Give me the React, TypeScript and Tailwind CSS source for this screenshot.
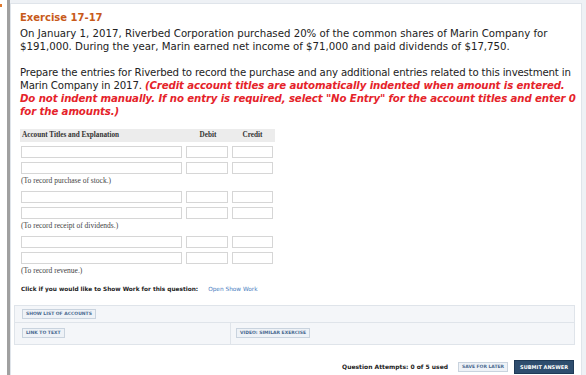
import React from "react";

const verdana = "font-['DejaVu_Sans',Verdana,sans-serif]";
const serif = "font-['Liberation_Serif',serif]";

function EntryRow() {
  return (
    <div className="flex gap-[4px] h-[12px]">
      <div className="w-[161px] border border-[#d6d6d6] bg-white" />
      <div className="w-[42px] border border-[#d6d6d6] bg-white" />
      <div className="w-[41px] border border-[#d6d6d6] bg-white" />
    </div>
  );
}

function Entry({ label }: { label: string }) {
  return (
    <div className="flex flex-col">
      <div className="flex flex-col gap-[4px]">
        <EntryRow />
        <EntryRow />
      </div>
      <p className={`${serif} text-[7.5px] text-[#444] mt-[2px] leading-[10px]`}>{label}</p>
    </div>
  );
}

function SmallBtn({ children }: { children: React.ReactNode }) {
  return (
    <span className={`${verdana} block border border-[#c9d3de] bg-[#eef2f7] text-[#4a6a90] font-bold text-[4.5px] px-[3px] py-[1px] leading-[6px]`}>
      {children}
    </span>
  );
}

export default function App() {
  return (
    <div className="flex w-[586px] h-[375px] overflow-hidden bg-white">
      <div className="w-[7px] relative">
        <div className="absolute left-0 top-[4px] w-[2px] h-[3px] bg-[#e07a30]" />
      </div>
      <div className="w-[3px] bg-[#a0a0a0]" />
      <div className="flex-1 flex flex-col bg-[#eef1f5] pt-[3px] pr-[4px]">
        <div className="flex-1 bg-white border-l border-t border-r border-[#dfe4ea] pl-[9px] pr-[2px] pt-[7px]">
          <h2 className={`${verdana} text-[10px] font-bold text-[#c85a1a] leading-[13px]`}>Exercise 17-17</h2>
          <p className={`${verdana} text-[10.2px] text-[#222] leading-[13px] mt-[3px]`}>
            On January 1, 2017, Riverbed Corporation purchased 20% of the common shares of Marin Company for $191,000. During the year, Marin earned net income of $71,000 and paid dividends of $17,750.
          </p>
          <p className={`${verdana} text-[10.2px] text-[#222] leading-[13px] mt-[13px] tracking-[-0.15px]`}>
            Prepare the entries for Riverbed to record the purchase and any additional entries related to this investment in Marin Company in 2017.{" "}
            <span className="text-[#e5232a] font-bold italic tracking-[-0.12px]">
              (Credit account titles are automatically indented when amount is entered. Do not indent manually. If no entry is required, select "No Entry" for the account titles and enter 0 for the amounts.)
            </span>
          </p>
          <div className="w-[255px] mt-[11px] flex flex-col gap-[4px]">
            <div className={`${serif} flex items-center h-[13px] bg-[#ececec] text-[7.2px] font-bold text-[#333]`}>
              <span className="w-[166px] pl-[2px]">Account Titles and Explanation</span>
              <span className="w-[44px] text-center">Debit</span>
              <span className="w-[45px] text-center">Credit</span>
            </div>
            <div className="pl-[1px] flex flex-col gap-[5px]">
              <Entry label="(To record purchase of stock.)" />
              <Entry label="(To record receipt of dividends.)" />
              <Entry label="(To record revenue.)" />
            </div>
          </div>
          <div className={`${verdana} flex items-center mt-[9px] text-[5.8px] pl-[1px]`}>
            <span className="font-bold text-[#222]">Click if you would like to Show Work for this question:</span>
            <span className="ml-[10px] text-[#4a80c0]">Open Show Work</span>
          </div>
          <div className="mt-[11px] -ml-[6px] mr-[4px] border border-[#dfe4ea] bg-[#f4f6f9]">
            <div className="flex items-center h-[17px] px-[7px] border-b border-[#dfe4ea]">
              <SmallBtn>SHOW LIST OF ACCOUNTS</SmallBtn>
            </div>
            <div className="flex h-[21px]">
              <div className="w-[216px] flex items-center px-[7px] border-r border-[#dfe4ea]">
                <SmallBtn>LINK TO TEXT</SmallBtn>
              </div>
              <div className="flex items-center px-[5px]">
                <SmallBtn>VIDEO: SIMILAR EXERCISE</SmallBtn>
              </div>
            </div>
          </div>
          <div className={`${verdana} flex items-center justify-end mt-[15px] pr-[5px]`}>
            <span className="text-[6px] font-bold text-[#222]">Question Attempts: 0 of 5 used</span>
            <div className="ml-[10px]">
              <SmallBtn>SAVE FOR LATER</SmallBtn>
            </div>
            <div className="ml-[6px] bg-[#2e4d6e] border border-[#1f3a57] text-white font-bold text-[5px] px-[5px] py-[3px] leading-[6px]">
              SUBMIT ANSWER
            </div>
          </div>
        </div>
      </div>
    </div>
  );
}
